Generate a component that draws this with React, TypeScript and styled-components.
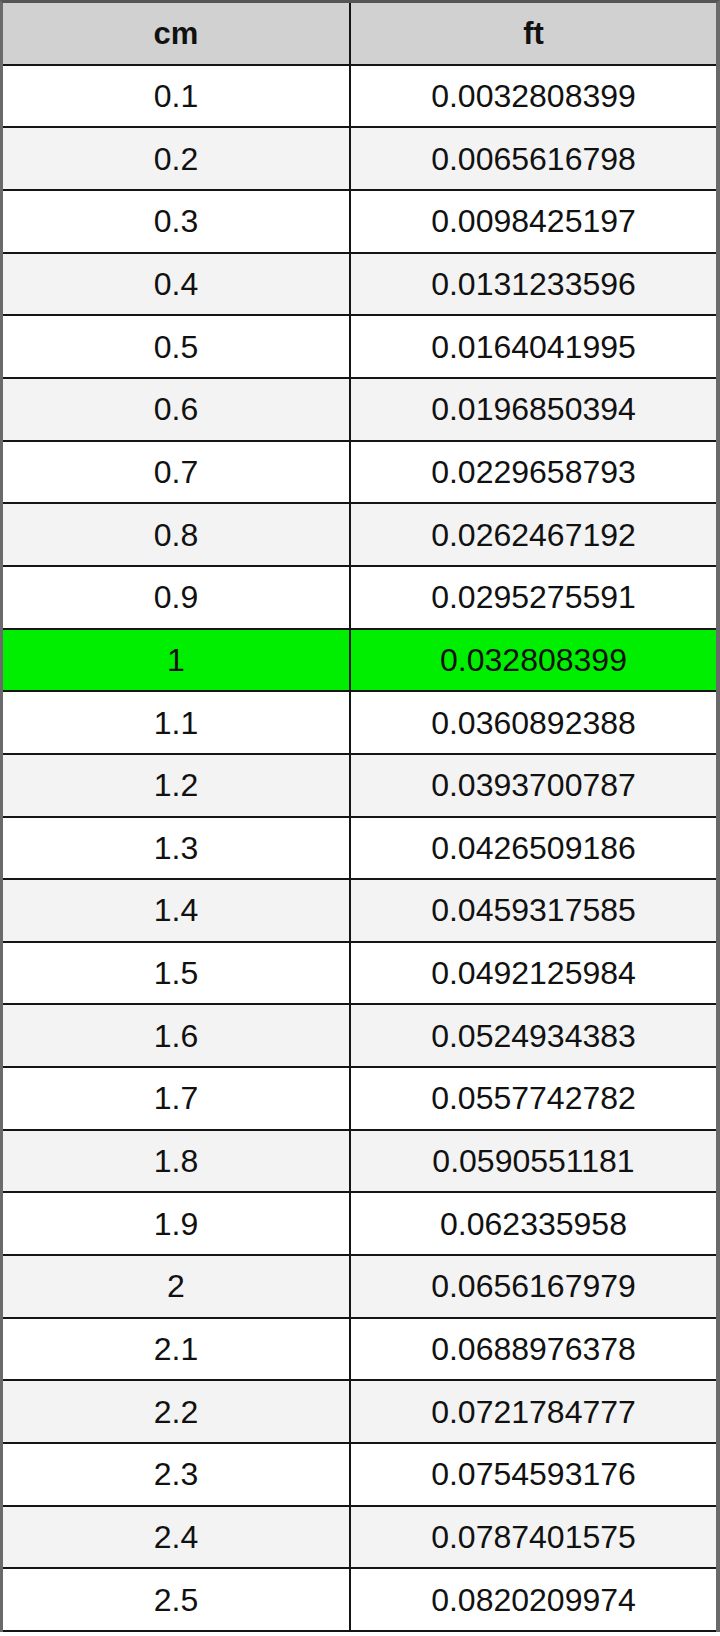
import React from 'react';
import styled, { createGlobalStyle } from 'styled-components';

const GlobalStyle = createGlobalStyle`
  html, body {
    margin: 0;
    padding: 0;
    background: #ffffff;
  }
`;

const Page = styled.div`
  width: 720px;
  height: 1636px;
  background: #ffffff;
`;

const Table = styled.div`
  box-sizing: border-box;
  width: 720px;
  height: 1632px;
  display: grid;
  grid-template-columns: 348px 1fr;
  grid-template-rows: repeat(26, 1fr);
  border-top: 3px solid #555555;
  border-left: 3px solid #6a6a6a;
  border-right: 4px solid #6a6a6a;
  font-family: "Liberation Sans", Arial, sans-serif;
  color: #111111;
`;

type CellProps = {
  variant: 'head' | 'odd' | 'even' | 'hit';
  first?: boolean;
}

const backgrounds = {
  head: '#d1d1d1',
  odd: '#ffffff',
  even: '#f3f3f3',
  hit: '#00ee00',
};

const Cell = styled.div<CellProps>`
  box-sizing: border-box;
  display: flex;
  align-items: center;
  justify-content: center;
  border-bottom: 2px solid #151515;
  border-right: ${props => props.first ? '2px solid #151515' : 'none'};
  background: ${props => backgrounds[props.variant]};
  font-size: ${props => props.variant === 'head' ? '31px' : '32px'};
  font-weight: ${props => props.variant === 'head' ? 700 : 400};
  padding-top: 1px;
`;

const rows = [
  ['0.1', '0.0032808399'],
  ['0.2', '0.0065616798'],
  ['0.3', '0.0098425197'],
  ['0.4', '0.0131233596'],
  ['0.5', '0.0164041995'],
  ['0.6', '0.0196850394'],
  ['0.7', '0.0229658793'],
  ['0.8', '0.0262467192'],
  ['0.9', '0.0295275591'],
  ['1', '0.032808399'],
  ['1.1', '0.0360892388'],
  ['1.2', '0.0393700787'],
  ['1.3', '0.0426509186'],
  ['1.4', '0.0459317585'],
  ['1.5', '0.0492125984'],
  ['1.6', '0.0524934383'],
  ['1.7', '0.0557742782'],
  ['1.8', '0.0590551181'],
  ['1.9', '0.062335958'],
  ['2', '0.0656167979'],
  ['2.1', '0.0688976378'],
  ['2.2', '0.0721784777'],
  ['2.3', '0.0754593176'],
  ['2.4', '0.0787401575'],
  ['2.5', '0.0820209974'],
];

export default function App() {
  return (
    <Page>
      <GlobalStyle />
      <Table>
        <Cell variant="head" first>cm</Cell>
        <Cell variant="head">ft</Cell>
        {rows.map(([cm, ft], index) => {
          const variant = cm === '1' ? 'hit' : index % 2 === 0 ? 'odd' : 'even';
          return (
            <React.Fragment key={cm}>
              <Cell variant={variant} first>{cm}</Cell>
              <Cell variant={variant}>{ft}</Cell>
            </React.Fragment>
          );
        })}
      </Table>
    </Page>
  );
}
